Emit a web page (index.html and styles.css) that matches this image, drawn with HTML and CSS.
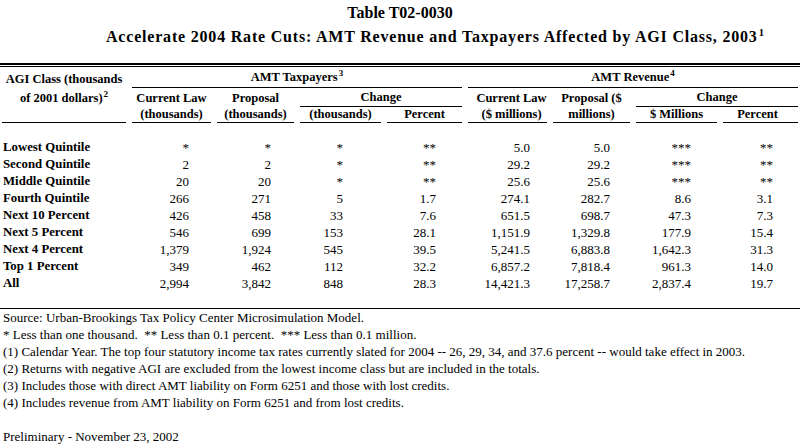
FILE: index.html
```html
<!DOCTYPE html>
<html lang="en">
<head>
<meta charset="utf-8">
<title>Table T02-0030</title>
<link rel="stylesheet" href="styles.css">
</head>
<body>
<div class="page">
  <h1 class="title">Table T02-0030</h1>
  <h2 class="subtitle">Accelerate 2004 Rate Cuts: AMT Revenue and Taxpayers Affected by AGI Class, 2003<sup>1</sup></h2>
  <div class="rule-double"></div>
  <div class="table-wrap">
    <table class="data">
      <colgroup>
        <col class="c0"><col class="c1"><col class="c2"><col class="c3"><col class="c4">
        <col class="c5"><col class="c6"><col class="c7"><col class="c8">
      </colgroup>
      <thead>
        <tr class="h1">
          <th class="agi" rowspan="3">AGI Class (thousands<br>of 2001 dollars)<sup>2</sup></th>
          <th colspan="4">AMT Taxpayers<sup>3</sup></th>
          <th colspan="4">AMT Revenue<sup>4</sup></th>
        </tr>
        <tr class="h2">
          <th class="two" rowspan="2">Current Law<br>(thousands)</th>
          <th class="two" rowspan="2">Proposal<br>(thousands)</th>
          <th colspan="2">Change</th>
          <th class="two rev-cur" rowspan="2">Current Law<br>($ millions)</th>
          <th class="two" rowspan="2">Proposal ($<br>millions)</th>
          <th colspan="2">Change</th>
        </tr>
        <tr class="h3">
          <th>(thousands)</th>
          <th>Percent</th>
          <th>$ Millions</th>
          <th class="rev-pct">Percent</th>
        </tr>
      </thead>
      <tbody>
        <tr class="spacer"><td colspan="9"></td></tr>
        <tr><th>Lowest Quintile</th><td>*</td><td>*</td><td>*</td><td>**</td><td>5.0</td><td>5.0</td><td>***</td><td>**</td></tr>
        <tr><th>Second Quintile</th><td>2</td><td>2</td><td>*</td><td>**</td><td>29.2</td><td>29.2</td><td>***</td><td>**</td></tr>
        <tr><th>Middle Quintile</th><td>20</td><td>20</td><td>*</td><td>**</td><td>25.6</td><td>25.6</td><td>***</td><td>**</td></tr>
        <tr><th>Fourth Quintile</th><td>266</td><td>271</td><td>5</td><td>1.7</td><td>274.1</td><td>282.7</td><td>8.6</td><td>3.1</td></tr>
        <tr><th>Next 10 Percent</th><td>426</td><td>458</td><td>33</td><td>7.6</td><td>651.5</td><td>698.7</td><td>47.3</td><td>7.3</td></tr>
        <tr><th>Next 5 Percent</th><td>546</td><td>699</td><td>153</td><td>28.1</td><td>1,151.9</td><td>1,329.8</td><td>177.9</td><td>15.4</td></tr>
        <tr><th>Next 4 Percent</th><td>1,379</td><td>1,924</td><td>545</td><td>39.5</td><td>5,241.5</td><td>6,883.8</td><td>1,642.3</td><td>31.3</td></tr>
        <tr><th>Top 1 Percent</th><td>349</td><td>462</td><td>112</td><td>32.2</td><td>6,857.2</td><td>7,818.4</td><td>961.3</td><td>14.0</td></tr>
        <tr><th>All</th><td>2,994</td><td>3,842</td><td>848</td><td>28.3</td><td>14,421.3</td><td>17,258.7</td><td>2,837.4</td><td>19.7</td></tr>
      </tbody>
    </table>
  </div>
  <div class="rule"></div>
  <div class="notes">
    <p>Source: Urban-Brookings Tax Policy Center Microsimulation Model.</p>
    <p>* Less than one thousand.&nbsp; ** Less than 0.1 percent.&nbsp; *** Less than 0.1 million.</p>
    <p>(1) Calendar Year. The top four statutory income tax rates currently slated for 2004 -- 26, 29, 34, and 37.6 percent -- would take effect in 2003.</p>
    <p>(2) Returns with negative AGI are excluded from the lowest income class but are included in the totals.</p>
    <p>(3) Includes those with direct AMT liability on Form 6251 and those with lost credits.</p>
    <p>(4) Includes revenue from AMT liability on Form 6251 and from lost credits.</p>
    <p class="prelim">Preliminary - November 23, 2002</p>
  </div>
</div>
</body>
</html>
```

FILE: styles.css
```css
html, body {
  margin: 0;
  padding: 0;
  background: #ffffff;
  overflow: hidden;
}

.page {
  width: 800px;
  height: 444px;
  overflow: hidden;
  font-family: "Liberation Serif", "Times New Roman", serif;
  color: #000000;
}

.title {
  margin: 4px 0 0 0;
  font-size: 16px;
  line-height: 18px;
  font-weight: bold;
  text-align: center;
}

.subtitle {
  margin: 6px 0 0 0;
  padding-left: 106px;
  font-size: 16px;
  line-height: 18px;
  font-weight: bold;
  letter-spacing: 0.8px;
  text-align: left;
  white-space: nowrap;
}

.subtitle sup {
  font-size: 10.5px;
  line-height: 0;
  vertical-align: 6px;
  letter-spacing: 0;
  margin-left: 1px;
}

.data sup {
  font-size: 9px;
  line-height: 0;
  vertical-align: 5px;
  margin-left: 1px;
}

.rule-double {
  margin-top: 17px;
  height: 1px;
  border-top: 2px solid #000;
  border-bottom: 1px solid #000;
}

.table-wrap {
  width: 800px;
  overflow: hidden;
}

.data {
  margin-left: -4px;
  width: 808px;
  table-layout: fixed;
  border-collapse: separate;
  border-spacing: 6px 0;
}

.c0 { width: 124px; }
.c1 { width: 79px; }
.c2 { width: 77px; }
.c3 { width: 81px; }
.c4 { width: 75px; }
.c5 { width: 79px; }
.c6 { width: 77px; }
.c7 { width: 81px; }
.c8 { width: 75px; }

.data thead th {
  font-size: 12.5px;
  font-weight: bold;
  text-align: center;
  white-space: nowrap;
  padding: 0;
  border-bottom: 1px solid #000;
  vertical-align: bottom;
}

.data .h1 th { line-height: 20px; }
.data .h2 th { line-height: 17px; }
.data .h3 th { line-height: 15px; }

.data thead th.agi {
  vertical-align: top;
  padding-top: 3px;
  line-height: 19px;
}

.data thead th.two {
  vertical-align: top;
  padding-top: 2px;
  line-height: 16px;
}

.data thead th.rev-cur { padding-left: 8px; }
.data thead th.rev-pct { padding-right: 6px; }

.data tbody th {
  font-size: 12.8px;
  font-weight: bold;
  text-align: left;
  white-space: nowrap;
  padding: 0 0 0 1px;
  line-height: 17px;
  height: 17px;
}

.data tbody td {
  font-size: 13px;
  text-align: right;
  white-space: nowrap;
  padding: 0;
  line-height: 17px;
  height: 17px;
}

.data .spacer td { height: 16px; }

.data tbody td:nth-child(2) { padding-right: 22px; }
.data tbody td:nth-child(3) { padding-right: 23px; }
.data tbody td:nth-child(4) { padding-right: 38px; }
.data tbody td:nth-child(5) { padding-right: 26px; }
.data tbody td:nth-child(6) { padding-right: 17px; }
.data tbody td:nth-child(7) { padding-right: 20px; }
.data tbody td:nth-child(8) { padding-right: 26px; }
.data tbody td:nth-child(9) { padding-right: 25px; }

.rule {
  margin-top: 16px;
  border-top: 1px solid #000;
}

.notes {
  font-size: 13px;
  line-height: 17px;
  padding-left: 3px;
}

.notes p {
  margin: 0;
  white-space: nowrap;
}

.notes .prelim {
  margin-top: 17px;
}
```
